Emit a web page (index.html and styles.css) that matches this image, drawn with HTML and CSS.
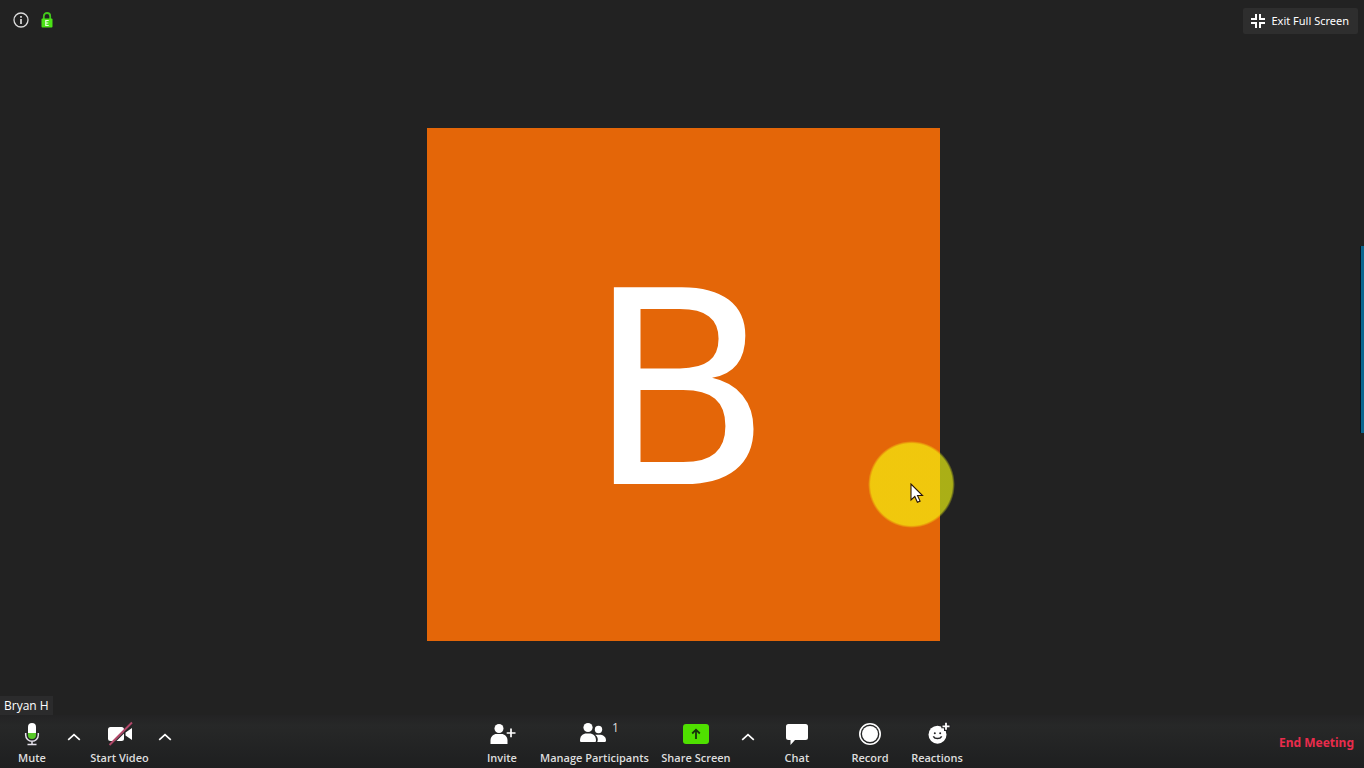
FILE: index.html
```html
<!DOCTYPE html>
<html lang="en">
<head>
<meta charset="utf-8">
<title>Meeting</title>
<link rel="stylesheet" href="styles.css">
</head>
<body>
<main class="meeting">
  <section class="stage" aria-label="Active speaker">
    <div class="avatar">B</div>
  </section>

  <header class="topbar">
    <div class="status">
      <button class="plain" type="button" aria-label="Meeting information">
        <svg width="16" height="16" viewBox="0 0 16 16" fill="none" stroke="#dcdcdc"><circle cx="8" cy="8" r="7" stroke-width="1.3"/><path d="M8 7v5" stroke-width="1.7"/><path d="M8 4v1.7" stroke-width="1.7"/></svg>
      </button>
      <button class="plain" type="button" aria-label="Encrypted">
        <svg class="lock" width="12" height="16" viewBox="0 0 12 16"><path d="M2.8 7V4.2a3.2 3.2 0 0 1 6.4 0V7" fill="none" stroke="#43c81c" stroke-width="1.8"/><rect x="0.5" y="6.5" width="11" height="9" rx="1" fill="#4be216"/><path d="M7.7 8.5H4.8v5h2.9M4.8 11h2.5" fill="none" stroke="#eaffdf" stroke-width="1.2"/></svg>
      </button>
    </div>
    <button class="exit" type="button">
      <svg width="14" height="14" viewBox="0 0 14 14" fill="none" stroke="#fff" stroke-width="2"><path d="M0 5h5V0M9 0v5h5M0 9h5v5M9 14V9h5"/></svg>
      Exit Full Screen
    </button>
  </header>

  <div class="name">Bryan H</div>

  <nav class="toolbar" aria-label="Meeting controls">
    <div class="group">
      <button class="tool mute" type="button">
        <svg width="32" height="26" viewBox="0 0 32 26"><defs><clipPath id="mic"><rect x="12" y="2" width="8" height="16" rx="4"/></clipPath></defs><g clip-path="url(#mic)"><rect x="12" y="2" width="8" height="10" fill="#fff"/><rect x="12" y="12" width="8" height="6" fill="#58c928"/></g><path d="M9.700 12v2a6.300 6.300 0 0 0 12.600 0v-2M16 20.300v3.200M11.500 23.600h9" fill="none" stroke="#e6e2ec" stroke-width="1.500"/></svg>
        <span>Mute</span>
      </button>
      <button class="caret" type="button" aria-label="Audio options"><svg width="14" height="8" viewBox="0 0 14 8"><path d="M1.200 6.800 7 1.600l5.800 5.200" fill="none" stroke="#fff" stroke-width="1.700"/></svg></button>
      <button class="tool video" type="button">
        <svg width="32" height="26" viewBox="0 0 32 26"><rect x="4" y="6" width="16" height="14" rx="2.500" fill="#fff"/><path d="M21.500 11.500 28 7v12l-6.500-4.500z" fill="#fff"/><path d="M6.500 25 29 2.500" stroke="#242426" stroke-width="1.500"/><path d="M5.500 24 28 1.500" stroke="#b04768" stroke-width="1.900"/></svg>
        <span>Start Video</span>
      </button>
      <button class="caret" type="button" aria-label="Video options"><svg width="14" height="8" viewBox="0 0 14 8"><path d="M1.200 6.800 7 1.600l5.800 5.200" fill="none" stroke="#fff" stroke-width="1.700"/></svg></button>
    </div>

    <div class="group">
      <button class="tool invite" type="button">
        <svg width="32" height="26" viewBox="0 0 32 26" fill="#fff"><circle cx="13" cy="7.500" r="4.500"/><path d="M4.500 23v-3.500c0-4 3-6.500 6-6.500h5c3 0 6 2.500 6 6.500V23z"/><path d="M25 7.500v8.800M20.700 12h8.800" stroke="#fff" stroke-width="1.700"/></svg>
        <span>Invite</span>
      </button>
      <button class="tool people" type="button">
        <svg width="36" height="26" viewBox="0 0 36 26" fill="#fff"><circle cx="12" cy="6.500" r="4.600"/><path d="M4 19.500C4 15 7 12.500 10.500 12.500h3c3.500 0 6.500 2.500 6.500 7 0 1-.5 1.500-1.500 1.500h-13C4.500 21 4 20.500 4 19.500z"/><circle cx="22.500" cy="8.500" r="3.700"/><path d="M19.200 13.800h4.300c3.500 0 6.500 2 6.500 5.400 0 1.200-.5 1.800-1.500 1.800h-7.200c1.200-2.700.3-5.500-2.100-7.200z"/></svg>
        <span>Manage Participants</span>
        <span class="count">1</span>
      </button>
      <button class="tool share" type="button">
        <svg width="32" height="26" viewBox="0 0 32 26"><rect x="3" y="3" width="26" height="20" rx="3" fill="#4fe000"/><path d="M16 18V9.500M12.200 12.500 16 8.700l3.800 3.800" fill="none" stroke="#17310b" stroke-width="1.800"/></svg>
        <span>Share Screen</span>
      </button>
      <button class="caret wide" type="button" aria-label="Share options"><svg width="14" height="8" viewBox="0 0 14 8"><path d="M1.200 6.800 7 1.600l5.800 5.200" fill="none" stroke="#fff" stroke-width="1.700"/></svg></button>
      <button class="tool chat" type="button">
        <svg width="32" height="26" viewBox="0 0 32 26"><path d="M7.500 3h17A2.500 2.500 0 0 1 27 5.500v11a2.500 2.500 0 0 1-2.500 2.500H14l-4.500 5V19h-2A2.500 2.500 0 0 1 5 16.500v-11A2.500 2.500 0 0 1 7.500 3z" fill="#fff"/></svg>
        <span>Chat</span>
      </button>
      <button class="tool record" type="button">
        <svg width="32" height="26" viewBox="0 0 32 26"><circle cx="16" cy="13" r="10.200" fill="none" stroke="#fff" stroke-width="1.600"/><circle cx="16" cy="13" r="8" fill="#fff"/></svg>
        <span>Record</span>
      </button>
      <button class="tool react" type="button">
        <svg width="32" height="26" viewBox="0 0 32 26"><circle cx="16.500" cy="13.700" r="9" fill="#fff"/><path d="M25 .5v9.500M20.300 5.300h9.500" stroke="#242426" stroke-width="4"/><path d="M25 1.800v7M21.500 5.300h7" stroke="#fff" stroke-width="1.800"/><circle cx="13.800" cy="12.200" r="1" fill="#242426"/><circle cx="19.200" cy="12.200" r="1" fill="#242426"/><path d="M12.300 15.300c1.700 3 6.700 3 8.400 0" fill="none" stroke="#242426" stroke-width="1.500"/></svg>
        <span>Reactions</span>
      </button>
    </div>

    <button class="end" type="button">End Meeting</button>
  </nav>

  <div class="side-tab"></div>
  <div class="pointer">
    <svg width="14" height="22" viewBox="0 0 14 22"><path d="M1 1v16l3.800-3.500 2.600 5.800 2.700-1.200-2.600-5.600h5z" fill="#fff" stroke="#2a1608" stroke-width="1.100"/></svg>
  </div>
</main>
</body>
</html>
```
FILE: styles.css
```css
* { box-sizing: border-box; }

body {
  margin: 0;
  background: #222;
  color: #fff;
  font-family: "Open Sans", "Noto Sans", sans-serif;
  font-size: 12px;
}

button {
  margin: 0;
  padding: 0;
  border: 0;
  background: none;
  color: inherit;
  font: inherit;
  cursor: pointer;
}

svg { display: block; }

.meeting {
  position: relative;
  display: flex;
  flex-direction: column;
  height: 100vh;
  overflow: hidden;
}

.stage {
  position: absolute;
  inset: 0;
  display: flex;
  justify-content: center;
  padding: 128px 0 127px 2px;
}

.avatar {
  display: flex;
  align-items: center;
  justify-content: center;
  height: 100%;
  padding: 12px 6px 0 0;
  aspect-ratio: 1;
  background: #e46608;
  font-family: "DejaVu Sans", sans-serif;
  font-size: 270px;
  line-height: 1;
}

.topbar {
  position: relative;
  display: flex;
  justify-content: space-between;
  align-items: center;
  padding: 8px 6px 0 13px;
}

.status {
  display: flex;
  align-items: center;
  gap: 12px;
  padding-bottom: 2px;
}

.exit {
  display: flex;
  align-items: center;
  gap: 7px;
  height: 26px;
  padding: 0 9px 1px 8px;
  border-radius: 2px;
  background: #2e2e2e;
  font-family: "Noto Sans", "Open Sans", sans-serif;
  font-size: 11px;
}

.name {
  position: relative;
  align-self: flex-start;
  margin-top: auto;
  padding: 0 4px;
  background: #2b2b2c;
  line-height: 19px;
}

.toolbar {
  position: relative;
  display: flex;
  justify-content: space-between;
  height: 53px;
  background: linear-gradient(#232324, #272828 20%, #1e1f20);
}

.group { display: flex; }

.tool {
  position: relative;
  display: flex;
  flex-direction: column;
  align-items: center;
  padding-top: 6px;
  color: #dedede;
  font-size: 11px;
  font-weight: 600;
  line-height: 21px;
  white-space: nowrap;
}

.mute { width: 64px; }
.video { width: 71px; }
.invite { width: 62px; }
.people { width: 123px; }
.share { width: 80px; }
.chat { width: 74px; }
.record { width: 72px; }
.react { width: 62px; }

.count {
  position: absolute;
  top: 2px;
  left: 79px;
  font-size: 12px;
  font-weight: 400;
}

.caret {
  display: flex;
  justify-content: center;
  width: 20px;
  padding-top: 18px;
}

.caret.wide { width: 24px; }

.end {
  padding: 2px 10px 0 15px;
  color: #e92c4c;
  font-family: "Noto Sans", "Open Sans", sans-serif;
  font-weight: 700;
}

.side-tab {
  position: absolute;
  top: 246px;
  right: 0;
  width: 4px;
  height: 187px;
  border-left: 1px solid #08131f;
  background: #0b668f;
}

.pointer {
  position: absolute;
  top: 441px;
  left: 868px;
  width: 87px;
  height: 87px;
  padding: 42px 0 0 42px;
  border-radius: 50%;
  background: radial-gradient(circle closest-side, rgba(247, 255, 16, 0.64) 94%, rgba(247, 255, 16, 0));
}
```
